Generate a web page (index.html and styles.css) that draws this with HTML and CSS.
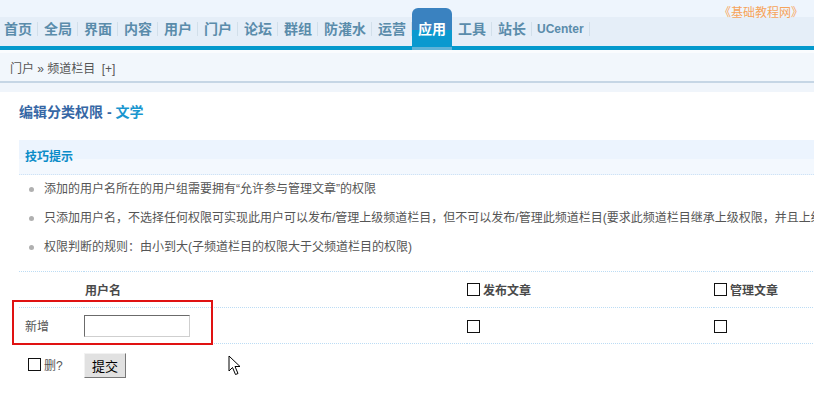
FILE: index.html
```html
<!DOCTYPE html>
<html lang="zh-CN">
<head>
    <meta charset="UTF-8">
    <title>编辑分类权限 - 文学</title>
    <link rel="stylesheet" href="styles.css">
</head>
<body>

    <div class="header">
        <ul class="nav">
            <li><a>首页</a></li>
            <li><a>全局</a></li>
            <li><a>界面</a></li>
            <li><a>内容</a></li>
            <li><a>用户</a></li>
            <li><a>门户</a></li>
            <li><a>论坛</a></li>
            <li><a>群组</a></li>
            <li><a>防灌水</a></li>
            <li><a>运营</a></li>
            <li class="active"><a>应用</a></li>
            <li><a>工具</a></li>
            <li><a>站长</a></li>
            <li class="uc"><a>UCenter</a></li>
        </ul>
        <div class="logo">《基础教程网》</div>
    </div>

    <div class="subnav">
        <div class="crumb">门户 » 频道栏目 <a class="add">[+]</a></div>
    </div>

    <div class="main">
        <h3 class="title">编辑分类权限 - <span>文学</span></h3>

        <div class="tips">
            <div class="tips-head">技巧提示</div>
            <ul class="tips-list">
                <li>添加的用户名所在的用户组需要拥有“允许参与管理文章”的权限</li>
                <li>只添加用户名，不选择任何权限可实现此用户可以发布/管理上级频道栏目，但不可以发布/管理此频道栏目(要求此频道栏目继承上级权限，并且上级频道栏目有权限)</li>
                <li>权限判断的规则：由小到大(子频道栏目的权限大于父频道栏目的权限)</li>
            </ul>
        </div>

        <table class="perm">
            <colgroup>
                <col class="c1">
                <col class="c2">
                <col class="c3">
                <col class="c4">
            </colgroup>
            <tr class="head">
                <td></td>
                <td class="uname">用户名</td>
                <td><label><input type="checkbox" class="chk">发布文章</label></td>
                <td><label><input type="checkbox" class="chk">管理文章</label></td>
            </tr>
            <tr class="row">
                <td class="name">新增</td>
                <td><input type="text" class="txt"></td>
                <td><input type="checkbox" class="chk"></td>
                <td><input type="checkbox" class="chk"></td>
            </tr>
            <tr class="foot">
                <td class="del"><label><input type="checkbox" class="chk">删?</label></td>
                <td><button class="btn">提交</button></td>
                <td></td>
                <td></td>
            </tr>
        </table>
    </div>

    <div class="mark"></div>

    <svg class="cursor" width="14" height="21" viewBox="0 0 14 21">
        <path d="M1 1 L1 16 L4.5 12.5 L7.5 19.5 L10 18.5 L7 11.5 L12 11.5 Z" fill="#fff" stroke="#000" stroke-width="1" stroke-linejoin="miter"/>
    </svg>

</body>
</html>
```

FILE: styles.css
```css
html, body {
    overflow: hidden;
}

body {
    margin: 0;
    font-family: "Liberation Sans", "Noto Sans CJK SC", sans-serif;
    font-size: 12px;
    color: #555;
    background-color: #fff;
}

.header {
    display: flex;
    align-items: flex-end;
    height: 46px;
    border-bottom: 4px solid #0399cd;
    background: linear-gradient(#eef5fd 0, #eef5fd 17px, #e5eef8 17px);
}

.nav {
    display: flex;
    align-items: flex-end;
    list-style: none;
    margin: 0 0 0 -2px;
    padding: 0;
}

.nav a {
    display: block;
    margin-bottom: 10px;
    padding: 0 5px 0 6px;
    line-height: 14px;
    font-size: 14px;
    font-weight: bold;
    color: #5a8cab;
    border-right: 1px solid #d2dfea;
}

.nav .active a {
    margin-bottom: -4px;
    padding: 14px 6px;
    border-right: none;
    border-radius: 6px 6px 0 0;
    color: #fff;
    background: linear-gradient(#3a82c0 0, #3a82c0 52%, #0a99cf 52%, #0a99cf 92%, #5fb3d8 92%);
}

.nav .uc a {
    font-size: 12px;
    padding-left: 5px;
    padding-right: 5px;
}

.logo {
    align-self: flex-start;
    margin: 6px 11px 0 auto;
    line-height: 14px;
    font-size: 12px;
    color: #f6a45b;
}

.subnav {
    padding: 3px 0 9px;
    background: linear-gradient(#fafcfe 0, #fafcfe 3px, #f0f5fb 3px);
}

.crumb {
    padding: 4px 0 0 10px;
    line-height: 24px;
    background-color: #f2f7fc;
    border-bottom: 2px solid #c6d6e5;
    color: #555;
}

.crumb .add {
    margin-left: 3px;
    color: #555;
}

.main {
    padding: 10px 0 0 19px;
}

.title {
    margin: 0;
    font-size: 14px;
    line-height: 20px;
    color: #3667a5;
}

.title span {
    color: #1996cf;
}

.tips {
    margin-top: 18px;
}

.tips-head {
    height: 34px;
    line-height: 35px;
    padding-left: 6px;
    font-weight: bold;
    color: #0a8cc8;
    background: linear-gradient(#ecf4fe 0, #ecf4fe 55%, #f3f8fe 55%);
    border-bottom: 1px dotted #cfe3f5;
}

.tips-list {
    list-style: none;
    margin: 0;
    padding: 0;
}

.tips-list li {
    padding-left: 10px;
    line-height: 29px;
    white-space: nowrap;
}

.tips-list li::before {
    content: "";
    display: inline-block;
    width: 5px;
    height: 5px;
    margin-right: 10px;
    border-radius: 50%;
    background-color: #b0b0b0;
    vertical-align: middle;
}

.perm {
    margin-top: 9px;
    width: 1100px;
    table-layout: fixed;
    border-collapse: collapse;
}

.perm .c1 {
    width: 65px;
}

.perm .c2 {
    width: 383px;
}

.perm .c3 {
    width: 247px;
}

.perm td {
    padding: 0;
    height: 35px;
    vertical-align: middle;
    white-space: nowrap;
}

.perm .head td,
.perm .row td {
    border-top: 1px dotted #bcdcf4;
}

.perm .row td {
    border-bottom: 1px dotted #bcdcf4;
}

.perm .foot td {
    height: 41px;
}

.head td {
    font-weight: bold;
    color: #4a4a4a;
}

.head .uname {
    padding-left: 1px;
}

.perm label {
    display: inline-flex;
    align-items: center;
}

.chk {
    appearance: none;
    width: 13px;
    height: 13px;
    margin: 0 3px 0 0;
    border: 1px solid #111;
    background-color: #fff;
    vertical-align: middle;
}

.perm .name {
    padding-left: 6px;
}

.perm .del {
    padding-left: 9px;
}

.txt {
    box-sizing: border-box;
    width: 106px;
    height: 22px;
    margin: 0;
    padding: 0 2px;
    border: 1px solid;
    border-color: #6b6b6b #cfcfcf #cfcfcf #6b6b6b;
    background-color: #fff;
    vertical-align: middle;
}

.btn {
    box-sizing: border-box;
    width: 42px;
    height: 25px;
    margin: 1px 0 0;
    padding: 0;
    font-family: "Liberation Sans", "Noto Sans CJK SC", sans-serif;
    font-size: 13px;
    color: #000;
    background-color: #e1e1e1;
    border: 1px solid;
    border-color: #f2f2f2 #777 #777 #f2f2f2;
    vertical-align: middle;
}

.mark {
    position: absolute;
    left: 12px;
    top: 300px;
    box-sizing: border-box;
    width: 201px;
    height: 45px;
    border: 2px solid #e01212;
}

.cursor {
    position: absolute;
    left: 228px;
    top: 355px;
}
```
